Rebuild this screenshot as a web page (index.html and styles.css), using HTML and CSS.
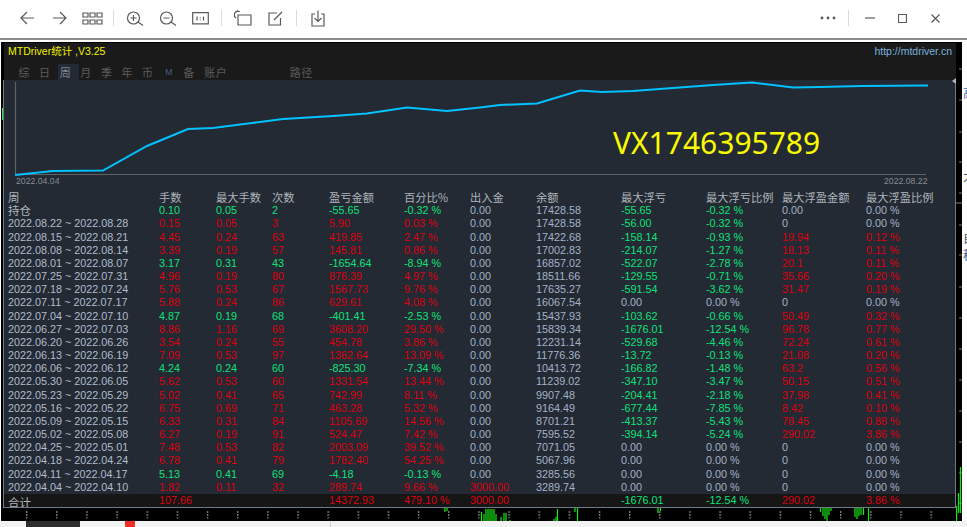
FILE: index.html
```html
<!DOCTYPE html>
<html lang="zh">
<head>
<meta charset="utf-8">
<title>MTDriver统计</title>
<link rel="stylesheet" href="styles.css">
</head>
<body>
<div class="page">
  <header class="toolbar">
    <div class="tool"><svg width="16" height="14" viewBox="0 0 16 14"><path d="M15 7H2M8 1 2 7l6 6"/></svg></div>
    <div class="tool"><svg width="16" height="14" viewBox="0 0 16 14"><path d="M1 7h13M8 1l6 6-6 6"/></svg></div>
    <div class="tool"><svg width="21" height="13" viewBox="0 0 21 13"><path d="M1 1h5v4H1zM8 1h5v4H8zM15 1h5v4h-5zM1 8h5v4H1zM8 8h5v4H8zM15 8h5v4h-5z"/></svg></div>
    <i class="sep"></i>
    <div class="tool"><svg width="18" height="15" viewBox="0 0 18 15"><circle cx="7.5" cy="7" r="6"/><path d="M4.5 7h6M7.5 4v6M12 11l5 3.5"/></svg></div>
    <div class="tool"><svg width="18" height="15" viewBox="0 0 18 15"><circle cx="7.5" cy="7" r="6"/><path d="M4.5 7h6M12 11l5 3.5"/></svg></div>
    <div class="tool"><svg width="17" height="13" viewBox="0 0 17 13"><path d="M.7.7h15.6v11.2H.7zM5 4.5v4M11.5 4.5v4M8.3 5v.8M8.3 7.5v.8"/></svg></div>
    <i class="sep"></i>
    <div class="tool"><svg width="19" height="16" viewBox="0 0 19 16"><path d="M5 5h13v10H5zM1.5 7V4q0-2 2.5-2.500h3M2.500 2 5 .5M3 8l-1.500-1.500"/></svg></div>
    <div class="tool"><svg width="15" height="15" viewBox="0 0 15 15"><path d="M12.500 7v7H1V2h8M6 9l8-8"/></svg></div>
    <i class="sep"></i>
    <div class="tool"><svg width="14" height="17" viewBox="0 0 14 17"><path d="M4 4H1v12h12V4h-3M7 .5V11M3.500 8 7 11.500 10.500 8"/></svg></div>
    <div class="tool-fill"></div>
    <div class="tool"><svg width="16" height="4" viewBox="0 0 16 4"><circle class="solid" cx="2" cy="2" r="1.400"/><circle class="solid" cx="8" cy="2" r="1.400"/><circle class="solid" cx="14" cy="2" r="1.400"/></svg></div>
    <i class="sep sep-wide"></i>
    <div class="tool"><svg width="10" height="2" viewBox="0 0 10 2"><path d="M0 1h10"/></svg></div>
    <div class="tool"><svg width="9" height="9" viewBox="0 0 9 9"><path d="M.5.5h8v8h-8z"/></svg></div>
    <div class="tool"><svg width="9" height="9" viewBox="0 0 9 9"><path d="m.5.500 8 8M8.500.500l-8 8"/></svg></div>
  </header>
  <div class="rule"></div>
  <div class="stage">
    <div class="gutter"><span class="gutter-mark"></span></div>
    <main class="window">
      <section class="panel">
        <div class="head">
          <div class="titlebar">
            <span class="brand">MTDriver统计 ,V3.25</span>
            <a class="site">http://mtdriver.cn</a>
          </div>
          <nav class="tabs">
            <span class="tab">综</span><span class="tab">日</span><span class="tab on">周</span><span class="tab">月</span><span class="tab">季</span><span class="tab">年</span><span class="tab">币</span><span class="tab m">M</span><span class="tab">备</span><span class="tab wide">账户</span><span class="tab path">路径</span>
          </nav>
          <span class="notch"></span>
        </div>
        <div class="chart">
          <svg width="951" height="111" viewBox="4 80 951 111">
            <path class="axis" d="M15.500 82v92.500H926"/>
            <polyline class="curve" points="15,175 53,171 103,170.500 147,146 188,129 213,128 283,119 333,116 367,113.500 407,107.500 447,111 480,107.500 500,105 537,103.500 580,90.500 602,92 633,91 673,88 713,85 752,82.500 773,85 793,87.500 820,87 862,86 928,85.500"/>
            <text class="stamp" x="16" y="183.500">2022.04.04</text>
            <text class="stamp" x="884" y="183.500">2022.08.22</text>
            <text class="vx" x="613" y="154">VX1746395789</text>
          </svg>
        </div>
        <div class="grid">
          <div class="row hd"><span class="wk">周</span><span>手数</span><span>最大手数</span><span>次数</span><span>盈亏金额</span><span>百分比%</span><span>出入金</span><span>余额</span><span>最大浮亏</span><span>最大浮亏比例</span><span>最大浮盈金额</span><span>最大浮盈比例</span></div>
          <div class="row"><span class="wk hold">持仓</span><span class="g">0.10</span><span class="g">0.05</span><span class="g">2</span><span class="g">-55.65</span><span class="g">-0.32 %</span><span>0.00</span><span>17428.58</span><span class="g">-55.65</span><span class="g">-0.32 %</span><span>0.00</span><span>0.00 %</span></div>
          <div class="row"><span class="wk">2022.08.22 ~ 2022.08.28</span><span class="r">0.15</span><span class="r">0.05</span><span class="r">3</span><span class="r">5.90</span><span class="r">0.03 %</span><span>0.00</span><span>17428.58</span><span class="g">-56.00</span><span class="g">-0.32 %</span><span>0</span><span>0.00 %</span></div>
          <div class="row"><span class="wk">2022.08.15 ~ 2022.08.21</span><span class="r">4.45</span><span class="r">0.24</span><span class="r">63</span><span class="r">419.85</span><span class="r">2.47 %</span><span>0.00</span><span>17422.68</span><span class="g">-158.14</span><span class="g">-0.93 %</span><span class="r">19.94</span><span class="r">0.12 %</span></div>
          <div class="row"><span class="wk">2022.08.08 ~ 2022.08.14</span><span class="r">3.39</span><span class="r">0.19</span><span class="r">57</span><span class="r">145.81</span><span class="r">0.86 %</span><span>0.00</span><span>17002.83</span><span class="g">-214.07</span><span class="g">-1.27 %</span><span class="r">18.13</span><span class="r">0.11 %</span></div>
          <div class="row"><span class="wk">2022.08.01 ~ 2022.08.07</span><span class="g">3.17</span><span class="g">0.31</span><span class="g">43</span><span class="g">-1654.64</span><span class="g">-8.94 %</span><span>0.00</span><span>16857.02</span><span class="g">-522.07</span><span class="g">-2.78 %</span><span class="r">20.1</span><span class="r">0.11 %</span></div>
          <div class="row"><span class="wk">2022.07.25 ~ 2022.07.31</span><span class="r">4.96</span><span class="r">0.19</span><span class="r">80</span><span class="r">876.39</span><span class="r">4.97 %</span><span>0.00</span><span>18511.66</span><span class="g">-129.55</span><span class="g">-0.71 %</span><span class="r">35.66</span><span class="r">0.20 %</span></div>
          <div class="row"><span class="wk">2022.07.18 ~ 2022.07.24</span><span class="r">5.76</span><span class="r">0.53</span><span class="r">67</span><span class="r">1567.73</span><span class="r">9.76 %</span><span>0.00</span><span>17635.27</span><span class="g">-591.54</span><span class="g">-3.62 %</span><span class="r">31.47</span><span class="r">0.19 %</span></div>
          <div class="row"><span class="wk">2022.07.11 ~ 2022.07.17</span><span class="r">5.88</span><span class="r">0.24</span><span class="r">86</span><span class="r">629.61</span><span class="r">4.08 %</span><span>0.00</span><span>16067.54</span><span>0.00</span><span>0.00 %</span><span>0</span><span>0.00 %</span></div>
          <div class="row"><span class="wk">2022.07.04 ~ 2022.07.10</span><span class="g">4.87</span><span class="g">0.19</span><span class="g">68</span><span class="g">-401.41</span><span class="g">-2.53 %</span><span>0.00</span><span>15437.93</span><span class="g">-103.62</span><span class="g">-0.66 %</span><span class="r">50.49</span><span class="r">0.32 %</span></div>
          <div class="row"><span class="wk">2022.06.27 ~ 2022.07.03</span><span class="r">8.86</span><span class="r">1.16</span><span class="r">69</span><span class="r">3608.20</span><span class="r">29.50 %</span><span>0.00</span><span>15839.34</span><span class="g">-1676.01</span><span class="g">-12.54 %</span><span class="r">96.78</span><span class="r">0.77 %</span></div>
          <div class="row"><span class="wk">2022.06.20 ~ 2022.06.26</span><span class="r">3.54</span><span class="r">0.24</span><span class="r">55</span><span class="r">454.78</span><span class="r">3.86 %</span><span>0.00</span><span>12231.14</span><span class="g">-529.68</span><span class="g">-4.46 %</span><span class="r">72.24</span><span class="r">0.61 %</span></div>
          <div class="row"><span class="wk">2022.06.13 ~ 2022.06.19</span><span class="r">7.09</span><span class="r">0.53</span><span class="r">97</span><span class="r">1362.64</span><span class="r">13.09 %</span><span>0.00</span><span>11776.36</span><span class="g">-13.72</span><span class="g">-0.13 %</span><span class="r">21.08</span><span class="r">0.20 %</span></div>
          <div class="row"><span class="wk">2022.06.06 ~ 2022.06.12</span><span class="g">4.24</span><span class="g">0.24</span><span class="g">60</span><span class="g">-825.30</span><span class="g">-7.34 %</span><span>0.00</span><span>10413.72</span><span class="g">-166.82</span><span class="g">-1.48 %</span><span class="r">63.2</span><span class="r">0.56 %</span></div>
          <div class="row"><span class="wk">2022.05.30 ~ 2022.06.05</span><span class="r">5.62</span><span class="r">0.53</span><span class="r">60</span><span class="r">1331.54</span><span class="r">13.44 %</span><span>0.00</span><span>11239.02</span><span class="g">-347.10</span><span class="g">-3.47 %</span><span class="r">50.15</span><span class="r">0.51 %</span></div>
          <div class="row"><span class="wk">2022.05.23 ~ 2022.05.29</span><span class="r">5.02</span><span class="r">0.41</span><span class="r">65</span><span class="r">742.99</span><span class="r">8.11 %</span><span>0.00</span><span>9907.48</span><span class="g">-204.41</span><span class="g">-2.18 %</span><span class="r">37.98</span><span class="r">0.41 %</span></div>
          <div class="row"><span class="wk">2022.05.16 ~ 2022.05.22</span><span class="r">6.75</span><span class="r">0.69</span><span class="r">71</span><span class="r">463.28</span><span class="r">5.32 %</span><span>0.00</span><span>9164.49</span><span class="g">-677.44</span><span class="g">-7.85 %</span><span class="r">8.42</span><span class="r">0.10 %</span></div>
          <div class="row"><span class="wk">2022.05.09 ~ 2022.05.15</span><span class="r">6.33</span><span class="r">0.31</span><span class="r">84</span><span class="r">1105.69</span><span class="r">14.56 %</span><span>0.00</span><span>8701.21</span><span class="g">-413.37</span><span class="g">-5.43 %</span><span class="r">78.45</span><span class="r">0.88 %</span></div>
          <div class="row"><span class="wk">2022.05.02 ~ 2022.05.08</span><span class="r">6.27</span><span class="r">0.19</span><span class="r">91</span><span class="r">524.47</span><span class="r">7.42 %</span><span>0.00</span><span>7595.52</span><span class="g">-394.14</span><span class="g">-5.24 %</span><span class="r">290.02</span><span class="r">3.86 %</span></div>
          <div class="row"><span class="wk">2022.04.25 ~ 2022.05.01</span><span class="r">7.48</span><span class="r">0.53</span><span class="r">82</span><span class="r">2003.09</span><span class="r">39.52 %</span><span>0.00</span><span>7071.05</span><span>0.00</span><span>0.00 %</span><span>0</span><span>0.00 %</span></div>
          <div class="row"><span class="wk">2022.04.18 ~ 2022.04.24</span><span class="r">6.78</span><span class="r">0.41</span><span class="r">79</span><span class="r">1782.40</span><span class="r">54.25 %</span><span>0.00</span><span>5067.96</span><span>0.00</span><span>0.00 %</span><span>0</span><span>0.00 %</span></div>
          <div class="row"><span class="wk">2022.04.11 ~ 2022.04.17</span><span class="g">5.13</span><span class="g">0.41</span><span class="g">69</span><span class="g">-4.18</span><span class="g">-0.13 %</span><span>0.00</span><span>3285.56</span><span>0.00</span><span>0.00 %</span><span>0</span><span>0.00 %</span></div>
          <div class="row"><span class="wk">2022.04.04 ~ 2022.04.10</span><span class="r">1.82</span><span class="r">0.11</span><span class="r">32</span><span class="r">289.74</span><span class="r">9.66 %</span><span class="r">3000.00</span><span>3289.74</span><span>0.00</span><span>0.00 %</span><span>0</span><span>0.00 %</span></div>
          <div class="row total"><span class="wk sum">合计</span><span class="r">107.66</span><span></span><span></span><span class="r">14372.93</span><span class="r">479.10 %</span><span class="r">3000.00</span><span></span><span class="g">-1676.01</span><span class="g">-12.54 %</span><span class="r">290.02</span><span class="r">3.86 %</span></div>
        </div>
      </section>
      <div class="ticks">
        <svg width="953" height="13" viewBox="3 508 953 13">
          <defs>
            <pattern id="dash" x="26" y="508" width="30.150" height="13" patternUnits="userSpaceOnUse">
              <rect class="dash" x="0" y="3" width="1.300" height="2"/><rect class="dash" x="0" y="6" width="1.300" height="2"/><rect class="dash" x="0" y="9" width="1.300" height="1.500"/>
            </pattern>
          </defs>
          <rect x="3" y="508" width="953" height="13" fill="url(#dash)"/>
          <path class="bar" d="M445 508v4M447 508v3M481.500 512v9M484 514v7M486 509v12M488 509v12M490 509v12M492 509v12M494 509v12M496 514v7M501 517v4M504 513v8M506 513v8M510 520v1M554 519v2M556 517v4M557.500 509v12M575 508v4M577.500 508v13M658 508v5M660.500 508v3M820.500 508v4M823 508v8M825 508v11M827 508v13M829 508v7M831 508v3M855 508v9M857 508v11M859 508v8M861 508v7M863.500 508v7M868.500 508v13"/>
        </svg>
      </div>
    </main>
    <aside class="rail">
      <svg width="6" height="479" viewBox="956 42 6 479">
        <path class="rail-tick" d="M959 69h3M959 100h3M959 132h3M959 162h3M959 193h3M956 203h6M959 225h3M959 255h3M959 287h3M959 318h3M959 349h3M959 380h3M959 411h3M959 442h3M959 473h3M959 503h3"/>
        <path class="rail-bar" d="M956.500 506v15M958.500 493v20M960.500 467v46"/>
      </svg>
    </aside>
    <aside class="peek">
      <span class="glyph blue">高</span>
      <span class="glyph">大</span>
      <span class="glyph">自</span>
      <span class="glyph tight">程</span>
    </aside>
  </div>
  <footer class="dock">
    <span class="dock-a"></span><span class="dock-b"></span><span class="dock-c"></span>
  </footer>
</div>
</body>
</html>
```

FILE: styles.css
```css
* { box-sizing: border-box; }
html, body { margin: 0; padding: 0; background: #fff; }
body { width: 967px; height: 527px; overflow: hidden; font-family: "Liberation Sans", "Noto Sans CJK SC", sans-serif; }
.page { display: flex; flex-direction: column; height: 527px; }

.toolbar { display: flex; align-items: center; height: 38px; padding: 0 15px 2px 10px; background: #fff; }
.tool { display: flex; align-items: center; justify-content: center; flex: none; width: 33px; height: 30px; }
.tool svg { fill: none; stroke: #5a5a5a; stroke-width: 1.200; }
.tool svg .solid { fill: #5a5a5a; stroke: none; }
.tool-fill { flex: 1; }
.sep { flex: none; width: 1px; height: 16px; margin: 0 4px; background: #dcdcdc; }
.sep-wide { margin: 0 4px; }
.rule { flex: none; height: 4px; border-top: 2px solid #8c8c8c; background: #fff; }

.stage { display: flex; flex: none; height: 479px; background: #fff; }
.gutter { flex: none; width: 3px; margin-left: 1px; padding-top: 66px; background: #000; }
.gutter-mark { display: block; width: 2px; height: 12px; margin-left: 1px; background: #35e838; }
.window { flex: none; width: 953px; margin-left: -1px; padding-top: 1px; background: #000; }
.panel { display: flex; flex-direction: column; height: 465px; }

.head { position: relative; flex: none; height: 37px; margin-left: 1px; padding: 2px 4px 0 4px; background: #1a1a1a; }
.titlebar { display: flex; justify-content: space-between; height: 16px; font-size: 10.500px; line-height: 13px; }
.brand { color: #f2f200; }
.site { color: #7ab2de; }
.tabs { display: flex; align-items: center; height: 18px; margin-top: 3px; padding-left: 9px; font-family: "Noto Sans CJK SC", sans-serif; font-size: 11px; color: #5c5c5c; }
.tab { flex: none; width: 20.600px; height: 18px; line-height: 16px; text-align: left; padding-left: 1.500px; }
.tab.on { color: #7c8692; background: #232a33; }
.tab.m { padding-left: 4px; font-family: "Liberation Sans", sans-serif; font-size: 8.500px; color: #4a607e; }
.tab.wide { width: 86px; padding-left: 2px; letter-spacing: .5px; }
.tab.path { width: 30px; letter-spacing: .5px; }
.notch { position: absolute; right: 0; bottom: -4px; width: 0; height: 0; border: 3px solid transparent; border-right: 4px solid #b4b8bc; border-left: 0; }

.chart { flex: none; height: 111px; border-left: 1px solid #6d7a88; border-right: 1px solid #6d7a88; background: #232a33; }
.chart svg { display: block; }
.axis { fill: none; stroke: #5f6368; stroke-width: 1.200; }
.curve { fill: none; stroke: #00c2ff; stroke-width: 2; }
.stamp { font-family: "Liberation Sans", sans-serif; font-size: 8.700px; fill: #868c93; }
.vx { font-family: "Noto Sans", sans-serif; font-size: 30px; fill: #fafa00; }

.grid { flex: none; border: 1px solid #6d7a88; border-top: 0; background: #232a33; }
.row { display: grid; grid-template-columns: 155px 57px 56px 57px 75px 66px 66px 85px 85px 76px 84px 1fr; height: 13.175px; font-size: 10.800px; line-height: 13.175px; color: #a3b2c8; white-space: nowrap; }
.row > span { display: block; }
.wk { padding-left: 4px; color: #b0bccd; }
.hd { font-family: "Noto Sans CJK SC", sans-serif; font-size: 11.250px; color: #adb4bb; }
.hd .wk { color: #adb4bb; font-size: 11.500px; }
.hold { font-family: "Noto Sans CJK SC", sans-serif; font-size: 11.500px; color: #adb4bb; }
.r { color: #dc0010; }
.g { color: #0fe07a; }
.total { height: 13px; background: #161616; }
.sum { font-family: "Noto Sans CJK SC", sans-serif; font-size: 11.500px; line-height: 17px; color: #adb4bb; overflow: hidden; height: 13px; }

.ticks { height: 13px; }
.ticks svg { display: block; }
.dash { fill: #808080; }
.bar { fill: none; stroke: #16e816; stroke-width: 1.200; }

.rail { flex: none; width: 6px; background: #000; }
.rail svg { display: block; }
.rail-tick { fill: none; stroke: #7b7b7b; stroke-width: 1; }
.rail-bar { fill: none; stroke: #16e816; stroke-width: 1.300; }

.peek { display: flex; flex-direction: column; flex: none; width: 5px; overflow: hidden; padding-top: 44px; background: #fdfdfd; font-family: "Noto Sans CJK SC", sans-serif; font-size: 12px; line-height: 14px; color: #555; }
.glyph { display: block; width: 14px; margin-left: 1px; margin-bottom: 69px; }
.glyph.blue { color: #3f6fae; }
.glyph:nth-child(2) { margin-bottom: 48px; }
.glyph:nth-child(3) { margin-bottom: 3px; }
.tight { color: #4a5a7a; }

.dock { display: flex; flex: none; height: 6px; background: #f2f2f2; }
.dock-a { flex: none; width: 54px; margin-left: 26px; background: #2d2d2d; }
.dock-b { flex: none; width: 10px; margin-left: 45px; background: #ee2f25; }
.dock-c { flex: none; width: 1px; margin-left: 195px; background: #d0d0d0; }
```
